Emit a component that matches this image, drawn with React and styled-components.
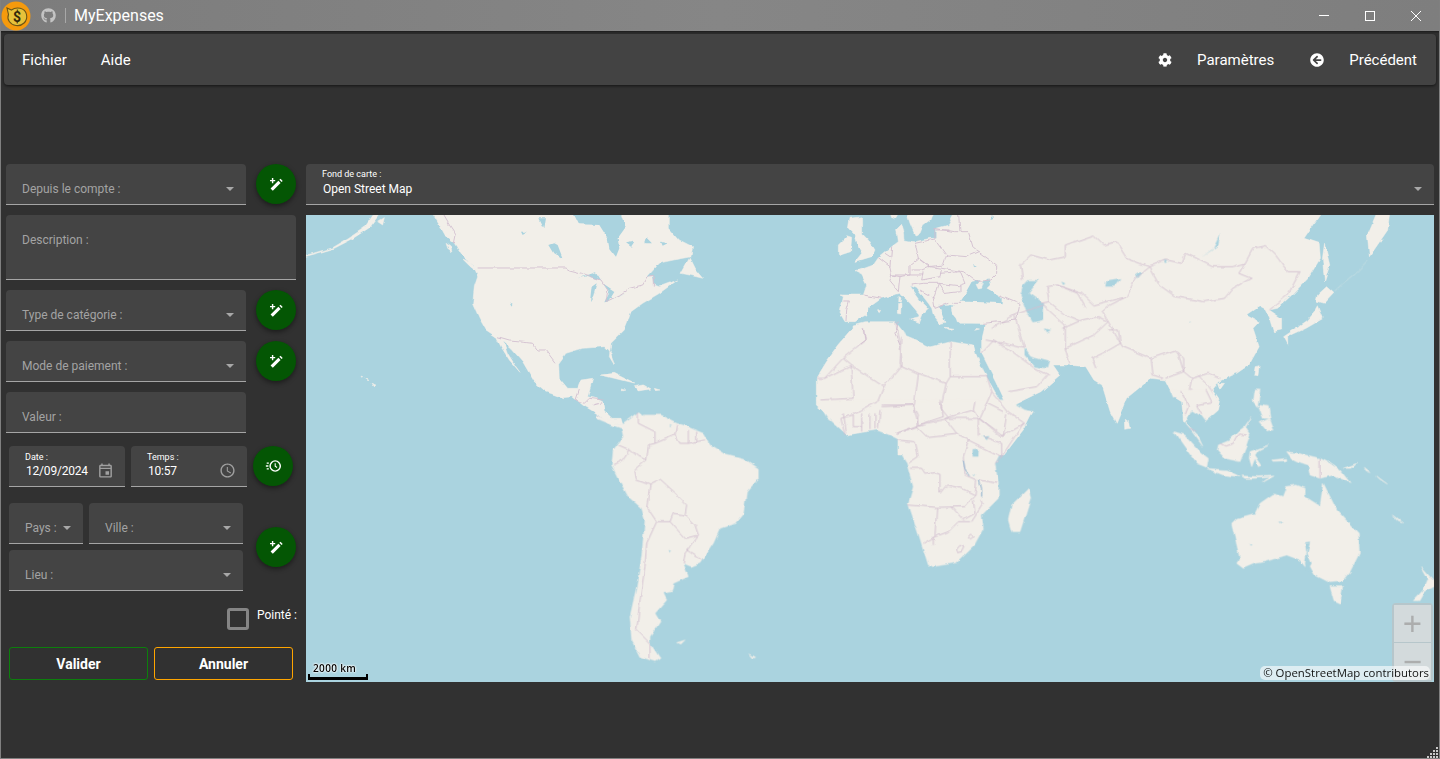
import React from "react";
import styled, { createGlobalStyle } from "styled-components";
import { FaCog, FaArrowCircleLeft, FaGithub } from "react-icons/fa";
import { MdOutlineEvent, MdOutlineAccessTime } from "react-icons/md";

const GlobalStyle = createGlobalStyle`
  html, body {
    margin: 0;
    padding: 0;
    background: #313131;
    font-family: Roboto, "Liberation Sans", sans-serif;
  }
  * {
    box-sizing: border-box;
  }
`;

const Page = styled.div`
  position: relative;
  width: 1440px;
  height: 759px;
  overflow: hidden;
  background: #313131;
  border: solid #808080;
  border-width: 0 1px 1px 1px;
  display: flex;
  flex-direction: column;
`;

const TitleBar = styled.header`
  height: 31px;
  margin: 0 -1px;
  flex: none;
  display: flex;
  align-items: center;
  background: linear-gradient(90deg, #7c7c7c, #868686 50%, #7e7e7e);
  box-shadow: 0 1px 2px rgba(0, 0, 0, 0.5);
  color: #fff;
`;

const Logo = styled.svg`
  width: 31px;
  height: 31px;
  margin-left: 1px;
  flex: none;
`;

const GithubLink = styled.span`
  display: flex;
  margin-left: 9px;
  color: #c4c4c4;
  font-size: 15px;
`;

const TitleDivider = styled.span`
  width: 1px;
  height: 15px;
  margin: 0 8px 0 9px;
  background: #a8a8a8;
`;

const AppName = styled.span`
  font-size: 16px;
`;

const WindowButtons = styled.div`
  margin-left: auto;
  margin-right: 1px;
  display: flex;
`;

const WindowButton = styled.svg`
  width: 46px;
  height: 31px;
  stroke: #fff;
  fill: none;
  stroke-width: 1;
`;

const MenuBar = styled.nav`
  height: 51px;
  margin: 3px 3px 0;
  flex: none;
  display: flex;
  align-items: center;
  padding: 0 19px 0 18px;
  background: #434343;
  border-radius: 4px;
  box-shadow: 0 1px 3px rgba(0, 0, 0, 0.6);
  color: #fff;
  font-size: 15px;
`;

const MenuItem = styled.span`
  display: flex;
  align-items: center;
  margin-left: ${(p) => p.$gap || 0}px;
`;

const MenuIcon = styled.span`
  display: flex;
  font-size: 14px;
  margin-right: 25px;
`;

const Spacer = styled.span`
  flex: 1;
`;

const Main = styled.main`
  flex: 1;
  display: flex;
  gap: 10px;
  padding: 79px 5px 0;
`;

const FormColumn = styled.section`
  width: 290px;
  flex: none;
  display: flex;
  flex-direction: column;
`;

const Row = styled.div`
  display: flex;
  gap: ${(p) => p.$gap ?? 10}px;
  margin-top: ${(p) => p.$top || 0}px;
  padding-left: ${(p) => p.$inset || 0}px;
  align-items: ${(p) => p.$align || "flex-start"};
`;

const FieldBox = styled.div`
  width: ${(p) => p.$width}px;
  height: ${(p) => p.$height || 41}px;
  flex: none;
  display: flex;
  align-items: ${(p) => (p.$tall ? "flex-start" : "flex-end")};
  justify-content: space-between;
  padding: ${(p) => (p.$tall ? "17px 16px 0" : "0 16px 7px")};
  background: #444444;
  border-radius: 4px 4px 0 0;
  border-bottom: 1px solid #a5a5a5;
  font-size: 12px;
  line-height: 16px;
  color: #a3a3a3;
`;

const Arrow = styled.i`
  width: 0;
  height: 0;
  margin: 0 -4px 6px 0;
  border: solid transparent;
  border-width: 4px 4px 0;
  border-top-color: #a8a8a8;
`;

const ValueField = styled.div`
  width: ${(p) => p.$width}px;
  height: 41px;
  flex: none;
  display: flex;
  justify-content: space-between;
  align-items: flex-end;
  padding: 0 ${(p) => p.$right || 16}px 7px 16px;
  background: #444444;
  border-radius: 4px 4px 0 0;
  border-bottom: 1px solid #a5a5a5;
  color: #fff;
`;

const ValueStack = styled.div`
  display: flex;
  flex-direction: column;
`;

const TinyLabel = styled.span`
  font-size: 9px;
  line-height: 11px;
`;

const ValueText = styled.span`
  font-size: 12px;
  line-height: 15px;
  margin: ${(p) => p.$drop || 1}px 0 0 1px;
  letter-spacing: ${(p) => (p.$tight ? "-0.2px" : "0")};
`;

const TrailingIcon = styled.span`
  display: flex;
  color: #a0a0a0;
  font-size: 17px;
`;

const RoundButton = styled.button`
  width: 40px;
  height: 40px;
  flex: none;
  display: flex;
  align-items: center;
  justify-content: center;
  padding: 0;
  border: 0;
  border-radius: 50%;
  background: #045604;
  box-shadow: 0 2px 5px rgba(0, 0, 0, 0.45);
`;

const LocationFields = styled.div`
  width: 234px;
  display: flex;
  flex-direction: column;
  gap: 6px;
`;

const CheckRow = styled.label`
  display: flex;
  justify-content: flex-end;
  gap: 8px;
  margin: 17px -1px 0 0;
  color: #fff;
  font-size: 12px;
  line-height: 14px;
`;

const CheckBox = styled.span`
  width: 22px;
  height: 22px;
  border: 3px solid #858585;
  border-radius: 3px;
`;

const ActionButton = styled.button`
  width: 139px;
  height: 33px;
  padding: 0;
  background: #313131;
  border: 1px solid ${(p) => p.$color};
  border-radius: 3px;
  color: #fff;
  font-family: inherit;
  font-size: 14px;
  font-weight: 700;
`;

const MapColumn = styled.section`
  flex: 1;
  min-width: 0;
  display: flex;
  flex-direction: column;
  gap: 10px;
`;

const MapSelect = styled(ValueField)`
  width: 100%;
`;

const MapFrame = styled.div`
  position: relative;
  width: 100%;
  height: 467px;
  overflow: hidden;
  background: #aad3df;
`;

const MapDrawing = styled.svg`
  display: block;
  width: 100%;
  height: 100%;
`;

const Land = styled.path`
  fill: #f2efe9;
  stroke: #f2efe9;
  stroke-width: 0.5px;
  stroke-linejoin: round;
  vector-effect: non-scaling-stroke;
`;

const Water = styled.path`
  fill: #aad3df;
`;

const Borders = styled.path`
  fill: none;
  stroke: #d3bfd0;
  stroke-width: 0.9px;
  stroke-linejoin: round;
  vector-effect: non-scaling-stroke;
`;

const LakeLines = styled(Borders)`
  stroke: #7fa8c9;
`;

const FaintChain = styled(Borders)`
  stroke: #c6dfe3;
`;

const ZoomControl = styled.div`
  position: absolute;
  right: 1px;
  top: 388px;
  display: flex;
  flex-direction: column;
  gap: 1px;
  padding: 2px;
  border-radius: 4px;
  background: rgba(190, 190, 190, 0.6);
`;

const ZoomButton = styled.span`
  width: 37px;
  height: 37px;
  display: flex;
  align-items: center;
  justify-content: center;
  background: rgba(235, 235, 235, 0.55);
  color: rgba(165, 165, 165, 0.85);
  font-size: 33px;
  font-family: "Liberation Sans", sans-serif;
`;

const Attribution = styled.div`
  position: absolute;
  right: 4px;
  bottom: 2px;
  padding: 0 1px 0 3px;
  height: 14px;
  line-height: 14px;
  border-radius: 5px;
  background: rgba(255, 255, 255, 0.6);
  color: #111;
  font-family: "Open Sans", sans-serif;
  font-size: 11.4px;
`;

const ScaleLine = styled.div`
  position: absolute;
  left: 2px;
  bottom: 2px;
  width: 60px;
`;

const ScaleLabel = styled.div`
  padding-left: 5px;
  color: #000;
  font-size: 10px;
  line-height: 12px;
  letter-spacing: 0.35px;
  font-family: "Open Sans", sans-serif;
  font-weight: 600;
  text-shadow: 0 0 2px #fff, 0 0 2px #fff, 0 0 2px #fff;
`;

const ScaleBar = styled.div`
  height: 6px;
  border: 2px solid #000;
  border-top: 0;
  border-bottom-width: 3px;
`;

const ResizeGrip = styled.svg`
  position: absolute;
  right: 0;
  bottom: 0;
  width: 12px;
  height: 12px;
  fill: #c8c8c8;
`;

// map traced from crops of the picture, each group has its own crop scale
const REGIONS = {
  north: "translate(306 215) scale(0.33333)",
  south: "translate(560 400) scale(0.33333)",
  asia: "translate(800 215) scale(0.40816 0.33333)",
  europe: "translate(820 215) scale(0.33333)",
  oceania: "translate(1130 390) scale(0.33333)",
};

const NORTH_LAND = [
  "M375,-12 L400,30 L420,65 L445,85 L470,125 L500,150 L515,185 L505,215 L500,265 L520,310 L540,345 L570,365 L585,395 L610,435 L642,472 L630,455 L605,415 L592,380 L615,400 L650,440 L685,500 L720,530 L770,548 L800,545 L830,570 L880,600 L905,625 L950,628 L945,610 L915,610 L895,590 L890,560 L870,550 L845,545 L860,490 L825,495 L815,520 L785,520 L760,490 L758,445 L780,415 L830,400 L895,395 L915,415 L925,450 L910,425 L915,385 L955,345 L965,320 L975,290 L1010,265 L1060,235 L1115,195 L1060,215 L1045,210 L1040,185 L1020,190 L1060,145 L1130,130 L1155,125 L1160,95 L1120,75 L1090,40 L1090,-12 Z",
  "M1125,175 L1150,130 L1165,160 L1190,190 L1150,180 Z",
  "M885,480 L925,475 L985,505 L945,495 Z",
  "M985,512 L1010,507 L1035,522 L1000,528 Z",
  "M945,522 L960,525 L950,528 Z",
  "M1045,520 L1062,525 L1048,527 Z",
  "M195,505 L210,510 L203,516 Z",
  "M165,483 L170,485 L167,487 Z M180,490 L186,493 L182,494 Z",
  "M-12,123 L30,113 L80,98 L130,68 L175,38 L210,-12 L228,-12 L190,38 L135,74 L85,100 L30,116 L-12,127 Z",
  "M215,20 L235,8 L230,30 Z",
  "M420,85 L435,95 L438,110 L425,100 Z",
  "M470,135 L495,145 L510,170 L490,155 Z",
];
const NORTH_WATER = [
  "M800,-12 L820,28 L880,30 L905,70 L910,100 L930,125 L940,100 L935,70 L960,35 L945,-12 Z",
  "M815,190 L870,172 L885,195 L845,183 Z M855,262 L860,215 L875,205 L865,245 Z M890,205 L925,228 L905,260 L895,262 L910,230 Z M900,262 L960,232 L930,245 Z",
  "M730,90 L745,115 L770,130 L755,90 L745,85 Z",
  "M700,10 L720,10 L715,40 Z M645,50 L665,50 L650,60 Z M610,262 L620,266 L615,272 Z",
  "M1020,70 L1035,85 L1015,85 Z M960,85 L985,80 L975,95 Z M1065,80 L1085,85 L1070,92 Z M1050,150 L1100,150 L1060,170 Z",
];
const NORTH_BORDERS =
  "M405,-12 L430,30 L450,60 L445,85 M515,159 L780,159 L790,165 L830,175 L885,195 L905,225 L900,260 L940,240 L970,220 L1010,210 L1025,185 L1045,185 L1045,215 M575,368 L610,378 L655,382 L680,385 L695,405 L720,405 L750,445 M820,525 L810,555 L835,565 L850,550 L890,555 M860,570 L890,562 M875,600 L900,620";

const SOUTH_LAND = [
  "M110,45 L165,70 L190,72 L240,35 L250,45 L300,45 L350,70 L380,80 L430,100 L450,135 L490,160 L550,175 L595,205 L595,235 L560,275 L550,340 L525,370 L480,385 L460,430 L420,490 L395,500 L370,490 L385,530 L340,550 L335,575 L310,580 L320,600 L285,640 L300,665 L270,710 L270,730 L300,775 L285,785 L240,770 L215,720 L210,650 L230,560 L245,470 L255,360 L245,325 L205,290 L175,235 L155,195 L160,150 L190,110 L185,85 L165,78 L110,55 Z",
  "M350,728 L375,720 L362,733 Z",
  "M570,762 L587,772 L580,774 Z",
  "M770,0 L800,50 L860,103 L950,90 L990,105 L1020,120 L1015,150 L1040,190 L1060,260 L1045,310 L1075,400 L1105,495 L1120,500 L1190,488 L1240,440 L1270,385 L1265,345 L1315,295 L1315,250 L1305,190 L1330,140 L1420,35 L1395,30 L1340,0 Z",
  "M1405,265 L1412,295 L1380,395 L1355,395 L1345,360 L1355,315 Z",
];
const SOUTH_WATER = [
  "M245,42 L252,38 L252,48 Z M330,75 L335,78 L330,82 Z M326,450 L336,452 L330,458 Z",
  "M1265,110 L1285,108 L1278,120 Z M1238,220 L1245,225 L1240,228 Z",
];
const SOUTH_BORDERS =
  "M235,35 L235,70 L285,95 L285,130 L265,135 L260,180 M285,130 L345,105 L350,75 M345,105 L360,130 L385,130 M385,90 L385,130 L410,125 L410,95 M410,125 L435,120 M175,135 L210,150 L235,170 L260,180 M210,150 L190,180 L160,195 M260,180 L225,210 L230,240 L270,255 L260,320 M270,255 L300,240 L350,285 L380,315 L375,345 L340,340 L330,365 L290,365 L260,320 M330,365 L375,415 L415,405 L405,375 L375,345 M290,365 L260,430 L255,500 L240,600 L230,690 L270,730 L270,775 M415,405 L375,460 L370,490 M380,450 L425,480 M1070,80 L1100,110 L1190,100 L1225,120 L1210,170 L1215,225 L1250,240 L1245,285 L1205,265 L1160,255 L1140,280 L1140,220 L1125,215 L1095,220 L1085,205 L1050,205 M1010,120 L1065,125 L1075,170 L1045,190 M1045,315 L1130,322 L1215,320 L1245,285 M1130,322 L1125,410 L1165,395 L1195,365 L1230,365 M1175,320 L1210,360 L1245,340 L1240,300 M1125,410 L1090,430 M1120,435 L1120,410 M1190,445 L1200,433 L1212,438 L1205,452 L1192,455 Z M1225,410 L1232,402 L1240,410 L1232,417 Z M1225,120 L1325,170 L1305,190 M1270,110 L1325,130 L1325,170 L1390,70 M1260,240 L1310,250 M1265,300 L1270,310 L1235,365 M1140,0 L1150,50 L1075,75 L1010,100 M1190,100 L1155,55 L1240,30 L1255,55 L1255,110 M1255,55 L1330,110 L1340,40 M960,30 L955,85 M905,40 L905,95 M930,40 L930,90 M945,40 L945,88 M850,40 L860,100 M880,45 L880,80 L905,80 M965,20 L1060,15 L1075,45 L1070,80 M1070,80 L1010,100 M1240,30 L1245,5 M1280,10 L1330,35";
const SOUTH_LAKES = "M1210,180 L1215,210 L1228,228 M1258,240 L1265,270 L1265,290";

const ASIA_LAND = [
  "M500,-12 L1280,-12 L1235,70 L1272,85 L1275,130 L1245,190 L1205,240 L1170,280 L1150,285 L1180,310 L1180,345 L1160,350 L1150,310 L1140,285 L1125,275 L1095,300 L1125,320 L1110,340 L1125,395 L1100,450 L1070,475 L1030,497 L1020,510 L1010,525 L1030,560 L1024,585 L995,615 L985,590 L975,590 L950,575 L945,620 L940,620 L935,560 L915,545 L895,495 L860,490 L800,550 L775,625 L760,590 L740,510 L720,495 L700,455 L655,450 L620,450 L637,480 L590,530 L510,578 L480,500 L445,415 L445,375 L455,325 L385,320 L380,290 L395,268 L480,250 Z",
  "M130,330 L160,320 L235,320 L255,350 L260,365 L320,395 L370,380 L425,390 L432,420 L450,470 L505,590 L570,590 L550,640 L500,720 L240,720 L240,665 L200,640 L115,660 L85,620 L40,570 L40,490 L65,440 L95,390 L130,340 Z",
  "M1285,85 L1298,150 L1285,200 L1280,130 Z",
  "M1415,-12 L1445,-12 L1440,45 L1395,125 L1390,60 Z",
  "M1268,240 L1290,215 L1308,235 L1285,265 L1265,258 Z",
  "M1270,272 L1282,310 L1240,340 L1195,365 L1195,388 L1185,365 L1240,320 L1262,290 Z",
  "M1115,455 L1125,452 L1122,482 L1112,480 Z",
  "M1025,505 L1040,505 L1030,522 Z",
  "M797,610 L808,620 L810,640 L798,643 Z",
  "M430,340 L440,342 L428,346 Z",
];
const ASIA_WATER = [
  "M545,215 L560,195 L585,195 L560,235 L595,265 L595,315 L570,322 L555,290 L540,240 Z",
  "M550,400 L565,425 L610,440 L605,460 L575,455 L550,420 Z",
  "M1030,55 L1025,90 L985,125 L1010,105 Z",
  "M750,200 L785,192 L770,215 L748,215 Z M820,175 L840,170 L825,190 Z M890,135 L900,138 L895,145 Z",
  "M955,320 L958,322 L954,325 Z M640,200 L650,205 L645,210 Z M600,340 L615,345 L605,352 Z",
];
const ASIA_BORDERS =
  "M540,150 L565,120 L610,135 L650,125 L650,90 L720,60 L745,90 L775,80 L800,130 L855,155 L820,190 L800,245 L720,270 L690,235 L630,210 L605,215 L610,260 L590,265 M540,150 L545,195 M610,260 L650,300 L690,320 M630,210 L680,235 L700,280 M855,155 L895,135 L935,145 L945,115 L1010,155 L1060,155 L1090,145 L1075,175 L1105,190 L1060,220 L1040,250 L990,260 L920,245 L880,210 L855,155 M1090,145 L1110,100 L1140,92 L1165,120 L1195,170 L1225,170 L1195,240 L1150,285 M800,245 L760,270 L740,290 L755,320 L790,395 L860,430 L920,405 L940,430 L940,470 L960,490 L1000,475 L1030,490 M645,340 L690,315 L730,305 L755,320 L720,360 L650,400 L660,445 M525,300 L595,270 L650,330 L650,400 M525,300 L550,400 M455,375 L500,385 L550,400 M470,340 L525,300 M755,345 L780,345 L785,385 L750,410 L715,430 L725,460 M445,415 L475,375 L520,410 L575,460 L610,480 M510,530 L580,515 L605,480 M860,430 L865,480 L890,490 M925,410 L940,470 L895,490 M368,380 L368,485 L458,485 M250,365 L245,450 L290,475 L358,505 L368,485 M235,320 L245,385 L250,450 L205,515 L125,450 L105,430 L160,375 L155,340 M105,430 L60,490 L40,490 M60,490 L125,450 L130,550 L50,555 M205,515 L190,560 L130,600 M290,475 L280,570 L200,570 M358,505 L345,580 L365,610 L290,630 L280,580 M458,485 L470,530 L440,610 L395,610 L365,610 M470,530 L510,590 L550,625 L490,665 L440,610 M130,600 L100,610 L110,660 M960,490 L950,545 L985,575 L1015,560 L1005,520 L975,480 M940,545 L960,520";
const ASIA_CHAIN = "M1392,135 L1360,175 L1330,205 L1310,228";

const EUROPE_LAND = [
  "M105,170 L160,150 L175,128 L215,95 L235,80 L232,55 L250,50 L252,75 L285,80 L330,70 L350,70 L350,40 L385,30 L408,-12 L630,-12 L630,240 L620,300 L590,320 L490,325 L420,325 L400,300 L380,290 L405,270 L355,272 L375,322 L360,325 L340,300 L335,280 L325,265 L290,220 L270,212 L300,255 L325,280 L310,295 L298,325 L300,300 L270,265 L240,235 L220,240 L185,250 L150,275 L140,300 L105,320 L75,320 L60,295 L70,245 L60,240 L130,240 L140,210 L125,180 Z",
  "M258,-12 L270,25 L285,60 L300,55 L310,30 L330,15 L340,-12 Z",
  "M230,40 L245,25 L252,50 L232,60 Z",
  "M205,-12 L240,-12 L225,12 L212,8 Z",
  "M90,10 L125,5 L125,55 L150,80 L165,105 L155,125 L105,140 L125,115 L115,95 L105,60 L85,40 Z",
  "M55,90 L80,65 L95,70 L92,110 L55,122 Z",
  "M233,265 L243,268 L242,297 L232,295 Z",
  "M237,245 L243,248 L241,262 L236,260 Z",
  "M272,312 L300,305 L296,322 Z",
  "M172,285 L182,283 L178,290 Z",
  "M372,337 L402,340 L385,344 Z",
];
const EUROPE_WATER = [
  "M420,260 L430,245 L455,200 L480,195 L470,215 L505,190 L510,210 L500,220 L545,245 L545,265 L490,262 L450,260 Z",
  "M360,280 L395,270 L400,300 L385,325 L375,318 Z",
  "M515,0 L525,8 L515,12 Z M460,150 L470,155 L462,160 Z",
];
const EUROPE_LAND_TOP = "M468,208 L490,205 L485,220 L475,222 Z";
const EUROPE_BORDERS =
  "M175,128 L210,155 L215,180 L210,200 L235,230 M130,240 L185,250 M70,258 L88,258 L80,285 L78,318 M215,95 L210,155 M215,180 L270,180 L270,150 L295,130 L285,85 M285,85 L345,72 L380,120 L370,150 L325,155 L295,130 M195,115 L210,125 M215,180 L240,185 L270,180 L310,180 M295,130 L330,155 L305,165 L275,165 M330,155 L365,160 L360,185 L305,195 L310,170 M360,175 L420,170 L435,205 L415,212 L355,205 M380,120 L440,125 L475,110 L530,150 L530,175 L510,195 L470,200 L430,170 L365,160 M345,72 L345,40 L400,50 L445,50 L460,100 L475,110 M355,205 L375,235 L420,230 L420,212 M275,210 L310,205 L355,205 L340,250 L345,280 L385,265 M300,225 L345,250 M400,265 L420,265 M490,325 L590,315 L600,265 M540,240 L600,265 M415,-12 L420,50 M350,45 L385,45 M240,185 L235,230 M235,320 L225,355 L240,390 M130,340 L135,375 L115,390";

const OCEANIA_LAND = [
  "M120,0 L130,25 L150,15 L165,45 L160,90 L180,115 L205,140 L218,168 L190,130 L165,100 L185,60 L210,75 L225,95 L265,60 L268,40 L240,0 Z",
  "M132,125 L165,135 L215,190 L235,205 L230,232 L200,220 L160,165 Z",
  "M230,235 L290,240 L330,260 L280,255 Z",
  "M335,258 L385,260 L435,258 L400,278 L420,262 L370,265 L345,265 Z",
  "M265,165 L300,150 L325,125 L345,110 L360,135 L350,165 L330,215 L285,205 L262,180 Z",
  "M360,185 L415,165 L385,180 L375,195 L395,225 L385,230 L375,205 L365,230 L358,205 Z",
  "M470,185 L505,190 L530,195 L570,205 L600,220 L630,240 L660,278 L610,255 L570,265 L540,255 L535,225 L505,215 L485,205 Z",
  "M375,0 L390,0 L382,50 L370,35 Z",
  "M385,45 L415,50 L420,85 L400,85 Z",
  "M390,98 L420,85 L432,120 L410,122 Z",
  "M345,115 L365,80 L345,108 Z",
  "M640,235 L680,220 L665,235 Z",
  "M700,232 L720,248 L705,242 Z M740,258 L772,282 L750,268 Z",
  "M790,375 L818,396 L805,392 Z",
  "M425,210 L470,205 L470,212 L430,214 Z",
  "M465,290 L500,285 L525,295 L470,295 Z",
  "M305,400 L320,385 L375,370 L390,340 L430,312 L460,320 L470,295 L525,295 L525,320 L570,348 L580,280 L620,360 L685,430 L688,490 L660,545 L635,575 L600,578 L555,555 L530,510 L525,530 L510,510 L470,495 L405,515 L375,520 L340,535 L320,520 L330,505 Z",
  "M600,590 L638,590 L630,640 L612,632 Z",
  "M875,530 L912,570 L912,590 L885,605 L870,632 L850,632 L880,600 L895,565 Z",
];
const OCEANIA_WATER = "M445,395 L458,396 L450,400 Z M360,465 L368,467 L362,470 Z M525,460 L540,458 L532,490 L545,520 L530,545 L525,520 L530,490 Z";
const OCEANIA_BORDERS =
  "M570,205 L570,265 M155,0 L175,50 L165,75 M200,45 L245,35 L228,0 M200,45 L215,75 M175,115 L195,122 M270,160 L285,168 L310,160 L325,132 L350,135";

function WandIcon() {
  return (
    <svg width="15" height="15" viewBox="0 0 15 15" fill="#fff">
      <path d="M1.6 11.6 L9.4 3.8 L11.6 6 L3.8 13.8 Z" />
      <path d="M10.4 2.8 L11.5 1.7 L13.7 3.9 L12.6 5 Z" />
      <path d="M3.6 1 V6.2 M1 3.6 H6.2" stroke="#fff" strokeWidth="1.4" />
    </svg>
  );
}

function FastClockIcon() {
  return (
    <svg width="17" height="14" viewBox="0 0 20 16" fill="none" stroke="#fff">
      <circle cx="12" cy="8" r="6" strokeWidth="1.7" />
      <path d="M12 4.8 V8.2 L14.2 9.7" strokeWidth="1.3" />
      <path d="M2 4.5 H4.5 M1 8 H4 M2 11.5 H4.5" strokeWidth="1.5" />
    </svg>
  );
}

function SelectField({ label, width }) {
  return (
    <FieldBox $width={width}>
      {label}
      <Arrow />
    </FieldBox>
  );
}

function WorldMap() {
  return (
    <MapDrawing viewBox="306 215 1128 467">
      <defs>
        {/* roughens the traced straight lines into coastlines */}
        <filter id="coast" filterUnits="userSpaceOnUse" x="280" y="190" width="1190" height="520">
          <feTurbulence type="fractalNoise" baseFrequency="0.09" numOctaves="3" seed="4" result="noise" />
          <feDisplacementMap in="SourceGraphic" in2="noise" scale="4" xChannelSelector="R" yChannelSelector="G" />
          <feGaussianBlur stdDeviation="0.35" />
        </filter>
      </defs>
      <g filter="url(#coast)">
        <g transform={REGIONS.north}>
          <Land d={NORTH_LAND.join(" ")} />
          <Water d={NORTH_WATER.join(" ")} />
          <Borders d={NORTH_BORDERS} />
        </g>
        <g transform={REGIONS.asia}>
          <Land d={ASIA_LAND.join(" ")} />
        </g>
        <g transform={REGIONS.south}>
          <Land d={SOUTH_LAND.join(" ")} />
          <Water d={SOUTH_WATER.join(" ")} />
          <Borders d={SOUTH_BORDERS} />
          <LakeLines d={SOUTH_LAKES} />
          <Water d="M1235,148 L1256,146 L1255,170 L1235,170 Z" />
        </g>
        <g transform={REGIONS.europe}>
          <Land d={EUROPE_LAND.join(" ")} />
          <Water d={EUROPE_WATER.join(" ")} />
          <Land d={EUROPE_LAND_TOP} />
          <Borders d={EUROPE_BORDERS} />
        </g>
        <g transform={REGIONS.asia}>
          <Water d={ASIA_WATER.join(" ")} />
          <Borders d={ASIA_BORDERS} />
          <FaintChain d={ASIA_CHAIN} />
        </g>
        <g transform={REGIONS.oceania}>
          <Land d={OCEANIA_LAND.join(" ")} />
          <Water d={OCEANIA_WATER} />
          <Borders d={OCEANIA_BORDERS} />
        </g>
      </g>
    </MapDrawing>
  );
}

export default function App() {
  return (
    <Page>
      <GlobalStyle />
      <TitleBar>
        <Logo viewBox="0 0 31 31">
          <circle cx="15" cy="16" r="14.5" fill="#f59a0d" />
          <path
            d="M6 8 L10.5 10 C15 6.5 24 7.5 25.5 14.5 C27 21.5 21 26.5 15 25.5 C9 24.5 5.5 19.5 7.5 14.5 Z"
            fill="#e6c23a"
            stroke="#6b5516"
            strokeWidth="1.1"
          />
          <text x="16" y="21.5" textAnchor="middle" fontSize="14" fontWeight="700" fill="#33290a">
            $
          </text>
        </Logo>
        <GithubLink>
          <FaGithub />
        </GithubLink>
        <TitleDivider />
        <AppName>MyExpenses</AppName>
        <WindowButtons>
          <WindowButton viewBox="0 0 46 31">
            <path d="M18 15.5 H28" />
          </WindowButton>
          <WindowButton viewBox="0 0 46 31">
            <rect x="18.5" y="11.5" width="9" height="9" />
          </WindowButton>
          <WindowButton viewBox="0 0 46 31">
            <path d="M18 11 L28 21 M28 11 L18 21" />
          </WindowButton>
        </WindowButtons>
      </TitleBar>

      <MenuBar>
        <MenuItem>Fichier</MenuItem>
        <MenuItem $gap={34}>Aide</MenuItem>
        <Spacer />
        <MenuItem>
          <MenuIcon>
            <FaCog />
          </MenuIcon>
          Paramètres
        </MenuItem>
        <MenuItem $gap={36}>
          <MenuIcon>
            <FaArrowCircleLeft />
          </MenuIcon>
          Précédent
        </MenuItem>
      </MenuBar>

      <Main>
        <FormColumn>
          <Row>
            <SelectField label="Depuis le compte :" width={240} />
            <RoundButton>
              <WandIcon />
            </RoundButton>
          </Row>
          <Row $top={10}>
            <FieldBox $width={290} $height={65} $tall>
              Description :
            </FieldBox>
          </Row>
          <Row $top={10}>
            <SelectField label="Type de catégorie :" width={240} />
            <RoundButton>
              <WandIcon />
            </RoundButton>
          </Row>
          <Row $top={10}>
            <SelectField label="Mode de paiement :" width={240} />
            <RoundButton>
              <WandIcon />
            </RoundButton>
          </Row>
          <Row $top={10}>
            <FieldBox $width={240}>Valeur :</FieldBox>
          </Row>
          <Row $top={13} $inset={3} $gap={6}>
            <ValueField $width={116} $right={11.5}>
              <ValueStack>
                <TinyLabel>Date :</TinyLabel>
                <ValueText $tight>12/09/2024</ValueText>
              </ValueStack>
              <TrailingIcon>
                <MdOutlineEvent />
              </TrailingIcon>
            </ValueField>
            <ValueField $width={116} $right={11.5}>
              <ValueStack>
                <TinyLabel>Temps :</TinyLabel>
                <ValueText $tight>10:57</ValueText>
              </ValueStack>
              <TrailingIcon>
                <MdOutlineAccessTime />
              </TrailingIcon>
            </ValueField>
            <RoundButton>
              <FastClockIcon />
            </RoundButton>
          </Row>
          <Row $top={16} $inset={3} $gap={13} $align="center">
            <LocationFields>
              <Row $gap={6}>
                <SelectField label="Pays :" width={74} />
                <SelectField label="Ville :" width={154} />
              </Row>
              <SelectField label="Lieu :" width={234} />
            </LocationFields>
            <RoundButton>
              <WandIcon />
            </RoundButton>
          </Row>
          <CheckRow>
            <CheckBox />
            Pointé :
          </CheckRow>
          <Row $top={17} $inset={3} $gap={6}>
            <ActionButton $color="#0c7f0c">Valider</ActionButton>
            <ActionButton $color="#ffa500">Annuler</ActionButton>
          </Row>
        </FormColumn>

        <MapColumn>
          <MapSelect>
            <ValueStack>
              <TinyLabel>Fond de carte :</TinyLabel>
              <ValueText $drop={2}>Open Street Map</ValueText>
            </ValueStack>
            <Arrow />
          </MapSelect>
          <MapFrame>
            <WorldMap />
            <ZoomControl>
              <ZoomButton>+</ZoomButton>
              <ZoomButton>−</ZoomButton>
            </ZoomControl>
            <ScaleLine>
              <ScaleLabel>2000 km</ScaleLabel>
              <ScaleBar />
            </ScaleLine>
            <Attribution>© OpenStreetMap contributors</Attribution>
          </MapFrame>
        </MapColumn>
      </Main>

      <ResizeGrip viewBox="0 0 12 12">
        <path d="M9 1h2v2H9z M6 4h2v2H6z M9 4h2v2H9z M3 7h2v2H3z M6 7h2v2H6z M9 7h2v2H9z M0 10h2v2H0z M3 10h2v2H3z M6 10h2v2H6z M9 10h2v2H9z" />
      </ResizeGrip>
    </Page>
  );
}
